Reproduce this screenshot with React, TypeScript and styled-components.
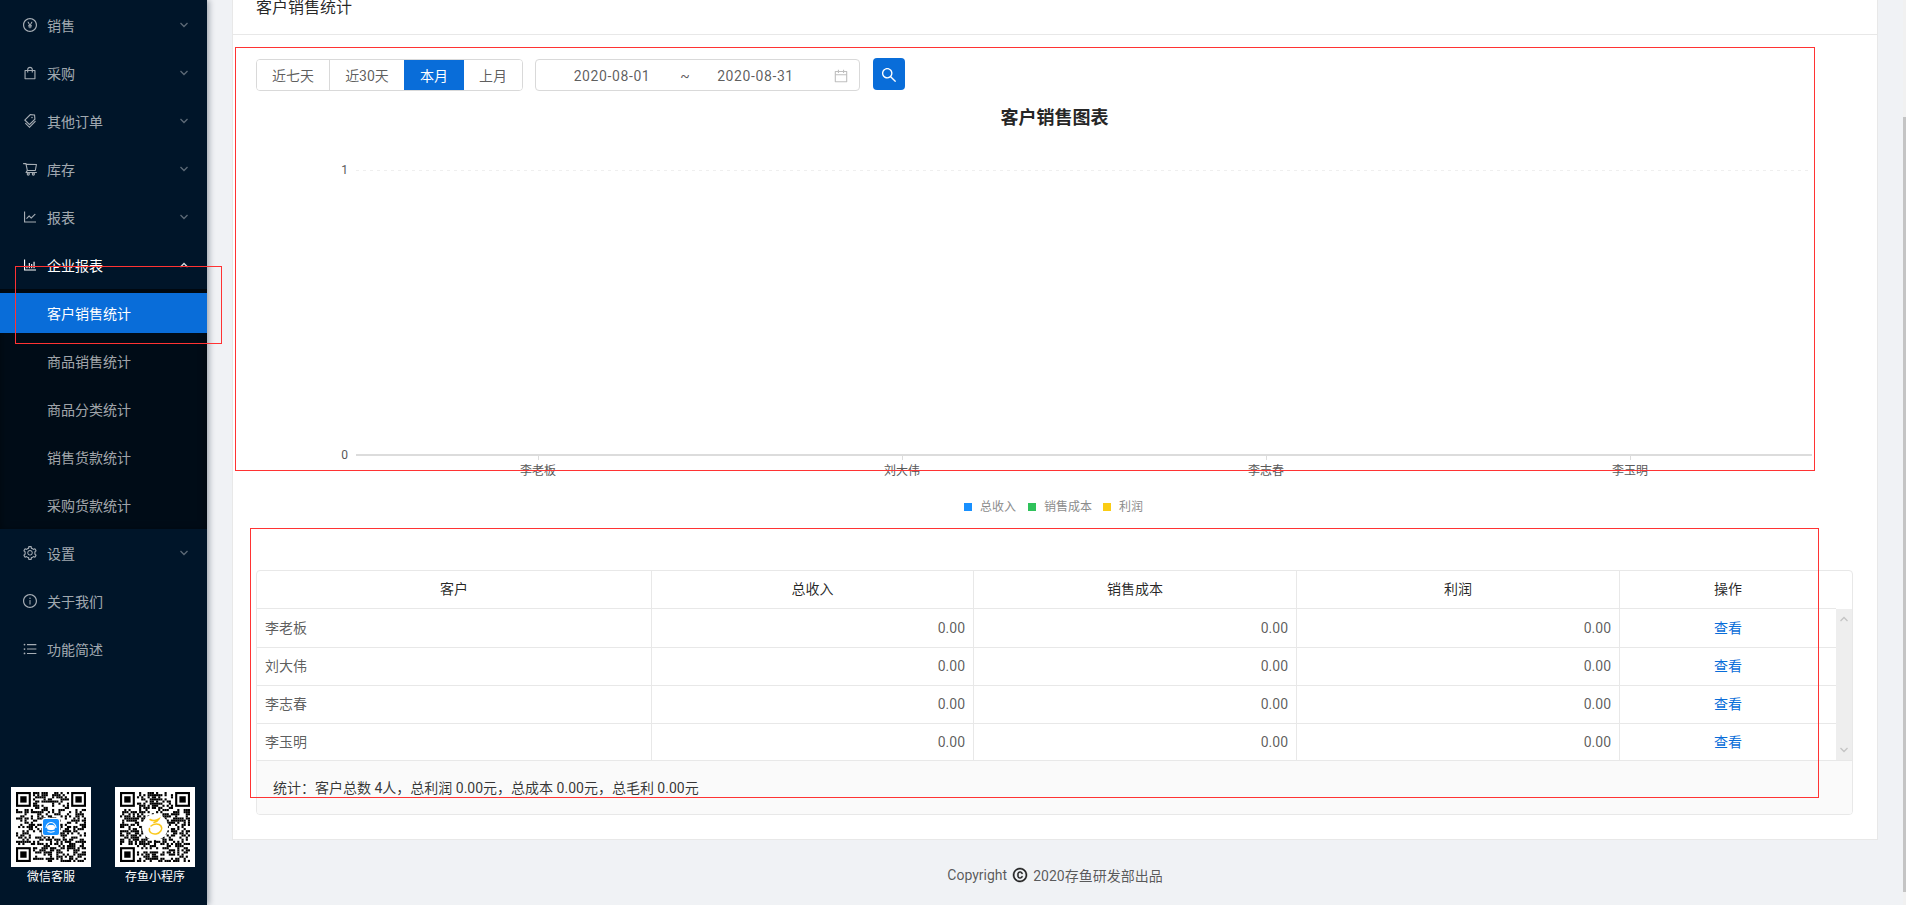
import React from "react";
import styled, { createGlobalStyle } from "styled-components";
import {
  AiOutlinePayCircle,
  AiOutlineShopping,
  AiOutlineTags,
  AiOutlineShoppingCart,
  AiOutlineLineChart,
  AiOutlineBarChart,
  AiOutlineSetting,
  AiOutlineInfoCircle,
  AiOutlineUnorderedList,
  AiOutlineSearch,
  AiOutlineCalendar,
  AiOutlineCopyright,
} from "react-icons/ai";

const FONT = `Roboto, "Liberation Sans", "Noto Sans CJK SC", sans-serif`;
const PRIMARY = "#096dd9";

const Global = createGlobalStyle`
  html, body { margin: 0; padding: 0; height: 905px; overflow: hidden; background: #f0f2f5; }
  body { font-family: ${FONT}; font-size: 14px; color: rgba(0,0,0,.65); }
  * { box-sizing: border-box; }
`;

const Shell = styled.div`
  position: relative;
  display: flex;
  width: 1906px;
  height: 905px;
  overflow: hidden;
`;

const Sidebar = styled.aside`
  flex: 0 0 207px;
  z-index: 1;
  display: flex;
  flex-direction: column;
  padding-top: 5px;
  background: #001529;
  box-shadow: 2px 0 6px rgba(0, 21, 41, 0.35);
`;

const MenuRow = styled.div<{ $open?: boolean }>`
  display: flex;
  align-items: center;
  gap: 9px;
  height: 40px;
  margin-bottom: 8px;
  padding: 0 18px 0 22px;
  color: ${(p) => (p.$open ? "#fff" : "rgba(255,255,255,.65)")};
  svg.icon { font-size: 16px; flex: none; }
`;

const MenuLabel = styled.span`
  flex: 1;
  line-height: 22px;
  padding-top: 1px;
`;

const Sub = styled.div`
  display: flex;
  flex-direction: column;
  gap: 8px;
  margin: -4px 0 4px;
  padding: 4px 0;
  background: #000c17;
  box-shadow: inset 0 2px 8px rgba(0, 0, 0, 0.45);
`;

const SubRow = styled.div<{ $active?: boolean }>`
  height: 40px;
  padding-left: 47px;
  line-height: 43px;
  background: ${(p) => (p.$active ? PRIMARY : "transparent")};
  color: ${(p) => (p.$active ? "#fff" : "rgba(255,255,255,.65)")};
`;

const QrStrip = styled.div`
  margin-top: auto;
  display: flex;
  gap: 24px;
  padding: 0 0 18px 11px;
`;

const QrCard = styled.figure`
  margin: 0;
  width: 80px;
  svg { display: block; }
  figcaption {
    height: 20px;
    line-height: 20px;
    text-align: center;
    font-size: 12px;
    color: #fff;
    white-space: nowrap;
  }
`;

const Main = styled.main`
  flex: 1;
  min-width: 0;
  display: flex;
  flex-direction: column;
  padding: 0 25px;
`;

const Card = styled.section`
  height: 840px;
  background: #fff;
  border: 1px solid #e8e8e8;
  border-top: 0;
  flex: none;
`;

const CardHead = styled.header`
  height: 35px;
  padding-left: 23px;
  border-bottom: 1px solid #e8e8e8;
  font-size: 16px;
  line-height: 16px;
  color: rgba(0, 0, 0, 0.85);
`;

const CardBody = styled.div`
  padding: 24px 24px 24px 23px;
`;

const Toolbar = styled.div`
  display: flex;
  align-items: flex-start;
  height: 32px;
`;

const BtnGroup = styled.div`
  display: flex;
  height: 32px;
  border: 1px solid #d9d9d9;
  border-radius: 4px;
  overflow: hidden;
`;

const RangeBtn = styled.div<{ $active?: boolean; $w: number; $divider?: boolean }>`
  width: ${(p) => p.$w}px;
  text-align: center;
  line-height: 32px;
  color: ${(p) => (p.$active ? "#fff" : "rgba(0,0,0,.65)")};
  background: ${(p) => (p.$active ? PRIMARY : "#fff")};
  border-left: ${(p) => (p.$divider ? "1px solid #d9d9d9" : "0")};
`;

const DateRange = styled.div`
  margin-left: 12px;
  width: 325px;
  height: 32px;
  display: grid;
  grid-template-columns: 130px 16px 125px 1fr;
  align-items: center;
  padding: 0 11px;
  border: 1px solid #d9d9d9;
  border-radius: 4px;
  text-align: center;
  line-height: 32px;
  svg { justify-self: end; color: rgba(0, 0, 0, 0.25); font-size: 16px; margin-right: -1px; }
`;

const DateText = styled.span`
  letter-spacing: 0.6px;
`;

const SearchBtn = styled.button`
  margin: -1px 0 0 13px;
  width: 32px;
  height: 32px;
  padding: 1px 0 0;
  border: 0;
  border-radius: 4px;
  background: ${PRIMARY};
  color: #fff;
  font-size: 18px;
  display: flex;
  align-items: center;
  justify-content: center;
`;

const ChartSvg = styled.svg`
  display: block;
  font-family: ${FONT};
  font-size: 12px;
`;

const TableFrame = styled.div`
  width: 1597px;
  height: 245px;
  border: 1px solid #e8e8e8;
  border-radius: 4px;
  overflow: hidden;
  display: flex;
  flex-direction: column;
`;

const COLS = "395px 322px 323px 323px 216px";

const HeadRow = styled.div`
  display: grid;
  grid-template-columns: ${COLS};
  height: 38px;
`;

const HeadCell = styled.div`
  border-right: 1px solid #e8e8e8;
  border-bottom: 1px solid #e8e8e8;
  text-align: center;
  line-height: 37px;
  color: rgba(0, 0, 0, 0.85);
  &:last-child { border-right: 0; }
`;

const BodyWrap = styled.div`
  display: flex;
  height: 151px;
`;

const Rows = styled.div`
  width: 1579px;
  flex: none;
`;

const Row = styled.div`
  display: grid;
  grid-template-columns: ${COLS};
  height: 38px;
  &:last-child { height: 37px; }
`;

const Cell = styled.div<{ $align?: string }>`
  padding: 0 8px;
  line-height: 38px;
  text-align: ${(p) => p.$align || "left"};
  border-right: 1px solid #e8e8e8;
  border-bottom: 1px solid #e8e8e8;
  ${Row}:last-child & { border-bottom: 0; }
  &:last-child { border-right: 0; }
`;

const LinkText = styled.span`
  color: ${PRIMARY};
`;

const ScrollTrack = styled.div`
  width: 16px;
  margin-left: auto;
  background: #eeeeee;
  display: flex;
  flex-direction: column;
  justify-content: space-between;
  align-items: center;
  padding: 7px 0;
  svg { display: block; }
`;

const TableFoot = styled.div`
  flex: 1;
  padding-left: 16px;
  border-top: 1px solid #e8e8e8;
  background: #fafafa;
  line-height: 54px;
  color: rgba(0, 0, 0, 0.8);
`;

const PageFoot = styled.footer`
  flex: 1;
  display: flex;
  align-items: center;
  justify-content: center;
  gap: 5px;
  padding-top: 4px;
  svg { color: rgba(0, 0, 0, 0.85); font-size: 16px; stroke: currentColor; stroke-width: 30px; }
`;

const PageScroll = styled.div`
  flex: 0 0 3px;
  background: #f1f1f1;
`;

const PageThumb = styled.div`
  margin-top: 117px;
  height: 775px;
  background: #c4c4c4;
`;

const Note = styled.div<{ $l: number; $t: number; $w: number; $h: number }>`
  position: absolute;
  z-index: 5;
  left: ${(p) => p.$l}px;
  top: ${(p) => p.$t}px;
  width: ${(p) => p.$w}px;
  height: ${(p) => p.$h}px;
  border: 1px solid #f33;
  pointer-events: none;
`;

const Arrow: React.FC<{ up?: boolean; color?: string }> = ({ up, color = "rgba(255,255,255,.36)" }) => (
  <svg width="10" height="6" viewBox="0 0 10 6" fill="none">
    <path d={up ? "M1.500 5L5 1.500L8.500 5" : "M1.500 1L5 4.500L8.500 1"} stroke={color} strokeWidth="1.3" />
  </svg>
);

const Qr: React.FC<{ seed: number; kind: "blue" | "yellow" }> = ({ seed, kind }) => {
  const n = 33;
  const m = 70 / n;
  const rects: React.ReactNode[] = [];
  let s = seed;
  const next = () => {
    s = (s * 1103515245 + 12345) & 0x7fffffff;
    return (s >> 16) & 1;
  };
  const inFinder = (x: number, y: number) =>
    (x < 8 && y < 8) || (x >= n - 8 && y < 8) || (x < 8 && y >= n - 8);
  for (let y = 0; y < n; y++) {
    for (let x = 0; x < n; x++) {
      const bit = next();
      if (!inFinder(x, y) && bit) {
        rects.push(<rect key={`${x}-${y}`} x={5 + x * m} y={5 + y * m} width={m} height={m} fill="#000" />);
      }
    }
  }
  const finder = (x: number, y: number) => (
    <g key={`f${x}${y}`}>
      <rect x={5 + x * m + m / 2} y={5 + y * m + m / 2} width={6 * m} height={6 * m} fill="none" stroke="#000" strokeWidth={m} />
      <rect x={5 + (x + 2) * m} y={5 + (y + 2) * m} width={3 * m} height={3 * m} fill="#000" />
    </g>
  );
  return (
    <svg width="80" height="80" viewBox="0 0 80 80">
      <rect width="80" height="80" fill="#fff" />
      {rects}
      {finder(0, 0)}
      {finder(n - 7, 0)}
      {finder(0, n - 7)}
      {kind === "blue" ? (
        <g>
          <rect x="31" y="31" width="18" height="18" rx="2" fill="#fff" />
          <rect x="32" y="32" width="16" height="16" rx="2" fill="#1890ff" />
          <path d="M35 41a5 5.500 0 0 1 10 0" fill="none" stroke="#fff" strokeWidth="1.2" />
          <rect x="36" y="38" width="8" height="5" rx="2.500" fill="#fff" />
          <path d="M36.500 44.500q3.500 1.500 7 0" fill="none" stroke="#fff" strokeWidth="1" />
        </g>
      ) : (
        <g>
          <circle cx="40" cy="40" r="13" fill="#fff" />
          <path
            d="M35 32.500c3 1.600 7 .8 9-.5-1 2-3 3-5 3.500M36 39c2.500-2.500 8-3 10 0 2 3.200-1 7.500-5 8-4 .6-7.500-2-6.500-5.500"
            fill="none"
            stroke="#fac81e"
            strokeWidth="1.5"
            strokeLinecap="round"
          />
        </g>
      )}
    </svg>
  );
};

const menuTop = [
  { label: "销售", Icon: AiOutlinePayCircle },
  { label: "采购", Icon: AiOutlineShopping },
  { label: "其他订单", Icon: AiOutlineTags },
  { label: "库存", Icon: AiOutlineShoppingCart },
  { label: "报表", Icon: AiOutlineLineChart },
];
const subItems = ["客户销售统计", "商品销售统计", "商品分类统计", "销售货款统计", "采购货款统计"];
const customers = ["李老板", "刘大伟", "李志春", "李玉明"];
const ticks = [282, 646, 1010, 1374];

export default function App() {
  return (
    <Shell>
      <Global />
      <Sidebar>
        {menuTop.map(({ label, Icon }) => (
          <MenuRow key={label}>
            <Icon className="icon" />
            <MenuLabel>{label}</MenuLabel>
            <Arrow />
          </MenuRow>
        ))}
        <MenuRow $open>
          <AiOutlineBarChart className="icon" />
          <MenuLabel>企业报表</MenuLabel>
          <Arrow up color="rgba(255,255,255,.85)" />
        </MenuRow>
        <Sub>
          {subItems.map((t, i) => (
            <SubRow key={t} $active={i === 0}>{t}</SubRow>
          ))}
        </Sub>
        <MenuRow>
          <AiOutlineSetting className="icon" />
          <MenuLabel>设置</MenuLabel>
          <Arrow />
        </MenuRow>
        <MenuRow>
          <AiOutlineInfoCircle className="icon" />
          <MenuLabel>关于我们</MenuLabel>
        </MenuRow>
        <MenuRow>
          <AiOutlineUnorderedList className="icon" />
          <MenuLabel>功能简述</MenuLabel>
        </MenuRow>
        <QrStrip>
          <QrCard>
            <Qr seed={20} kind="blue" />
            <figcaption>微信客服</figcaption>
          </QrCard>
          <QrCard>
            <Qr seed={77} kind="yellow" />
            <figcaption>存鱼小程序</figcaption>
          </QrCard>
        </QrStrip>
      </Sidebar>

      <Main>
        <Card>
          <CardHead>客户销售统计</CardHead>
          <CardBody>
            <Toolbar>
              <BtnGroup>
                <RangeBtn $w={72}>近七天</RangeBtn>
                <RangeBtn $w={75} $divider>近30天</RangeBtn>
                <RangeBtn $w={60} $active>本月</RangeBtn>
                <RangeBtn $w={58}>上月</RangeBtn>
              </BtnGroup>
              <DateRange>
                <DateText>2020-08-01</DateText>
                <span>~</span>
                <DateText>2020-08-31</DateText>
                <AiOutlineCalendar />
              </DateRange>
              <SearchBtn aria-label="search">
                <AiOutlineSearch />
              </SearchBtn>
            </Toolbar>

            <ChartSvg width="1597" height="479" viewBox="0 0 1597 479">
              <text x="798.5" y="33" textAnchor="middle" fontSize="18" fontWeight="700" fill="#262626">客户销售图表</text>
              <line x1="100" y1="79.5" x2="1556" y2="79.5" stroke="#efefef" strokeDasharray="3 4" />
              <text x="92" y="83" textAnchor="end" fill="#595959">1</text>
              <text x="92" y="368" textAnchor="end" fill="#595959">0</text>
              <line x1="100" y1="364" x2="1556" y2="364" stroke="#dcdcdc" strokeWidth="2" />
              {ticks.map((x, i) => (
                <g key={x}>
                  <line x1={x + 0.5} y1="365" x2={x + 0.5} y2="369" stroke="#dcdcdc" />
                  <text x={x} y="384" textAnchor="middle" fill="#595959">{customers[i]}</text>
                </g>
              ))}
              <rect x="708" y="412" width="8" height="8" fill="#1890ff" />
              <text x="724" y="420" fill="#8c8c8c">总收入</text>
              <rect x="772" y="412" width="8" height="8" fill="#2fc25b" />
              <text x="788" y="420" fill="#8c8c8c">销售成本</text>
              <rect x="847" y="412" width="8" height="8" fill="#facc14" />
              <text x="863" y="420" fill="#8c8c8c">利润</text>
            </ChartSvg>

            <TableFrame>
              <HeadRow>
                <HeadCell>客户</HeadCell>
                <HeadCell>总收入</HeadCell>
                <HeadCell>销售成本</HeadCell>
                <HeadCell>利润</HeadCell>
                <HeadCell>操作</HeadCell>
              </HeadRow>
              <BodyWrap>
                <Rows>
                  {customers.map((c) => (
                    <Row key={c}>
                      <Cell>{c}</Cell>
                      <Cell $align="right">0.00</Cell>
                      <Cell $align="right">0.00</Cell>
                      <Cell $align="right">0.00</Cell>
                      <Cell $align="center"><LinkText>查看</LinkText></Cell>
                    </Row>
                  ))}
                </Rows>
                <ScrollTrack>
                  <Arrow up color="#c4c4c4" />
                  <Arrow color="#c4c4c4" />
                </ScrollTrack>
              </BodyWrap>
              <TableFoot>统计：客户总数 4人，总利润 0.00元，总成本 0.00元，总毛利 0.00元</TableFoot>
            </TableFrame>
          </CardBody>
        </Card>
        <PageFoot>
          <span>Copyright</span>
          <AiOutlineCopyright />
          <span>2020存鱼研发部出品</span>
        </PageFoot>
      </Main>

      <PageScroll>
        <PageThumb />
      </PageScroll>

      <Note $l={15} $t={266} $w={207} $h={78} />
      <Note $l={235} $t={47} $w={1580} $h={424} />
      <Note $l={250} $t={528} $w={1569} $h={270} />
    </Shell>
  );
}
